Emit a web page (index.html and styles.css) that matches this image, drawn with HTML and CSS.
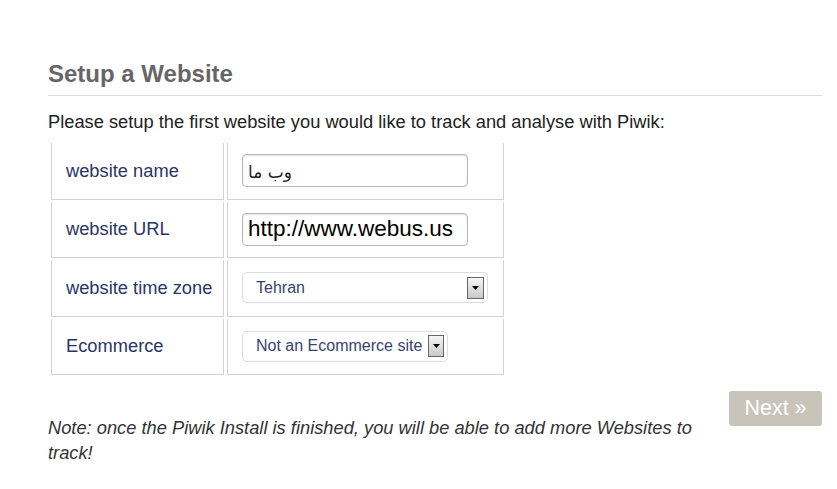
FILE: index.html
```html
<!DOCTYPE html>
<html>
<head>
<meta charset="utf-8">
<link rel="stylesheet" href="styles.css">
</head>
<body>
<div class="page">
  <h2 class="title">Setup a Website</h2>
  <p class="intro">Please setup the first website you would like to track and analyse with Piwik:</p>
  <table class="form">
    <tr>
      <td class="label">website name</td>
      <td class="field"><div class="input fa">وب ما</div></td>
    </tr>
    <tr>
      <td class="label">website URL</td>
      <td class="field"><div class="input url">http://www.webus.us</div></td>
    </tr>
    <tr>
      <td class="label">website time zone</td>
      <td class="field"><div class="select tz"><span class="sel-text">Tehran</span><span class="arrow"><svg width="7" height="4" viewBox="0 0 7 4"><path d="M0 0H7L3.5 4Z" fill="#000"/></svg></span></div></td>
    </tr>
    <tr>
      <td class="label">Ecommerce</td>
      <td class="field"><div class="select ec"><span class="sel-text">Not an Ecommerce site</span><span class="arrow"><svg width="7" height="4" viewBox="0 0 7 4"><path d="M0 0H7L3.5 4Z" fill="#000"/></svg></span></div></td>
    </tr>
  </table>
  <div class="bottom">
    <p class="note">Note: once the Piwik Install is finished, you will be able to add more Websites to track!</p>
    <div class="next">Next »</div>
  </div>
</div>
</body>
</html>
```

FILE: styles.css
```css
html, body {
  margin: 0;
  padding: 0;
  background: #fff;
}
body {
  font-family: "Liberation Sans", Arial, sans-serif;
  width: 837px;
  height: 489px;
  overflow: hidden;
}
.page {
  padding: 59px 15px 0 48px;
}
.title {
  margin: 0;
  font-size: 24px;
  font-weight: bold;
  color: #666;
  line-height: 30px;
  padding-bottom: 6px;
  border-bottom: 1px solid #ddd;
}
.intro {
  margin: 15px 0 0 0;
  font-size: 18.3px;
  line-height: 22px;
  color: #222;
}
.form {
  border-collapse: separate;
  border-spacing: 3px 2px;
  margin: 8px 0 0 0;
}
.form td {
  border: 1px solid #d3d3d3;
  border-top: none;
  height: 55.5px;
  padding: 0;
  vertical-align: middle;
}
.label {
  width: 157px;
  padding-left: 14px !important;
  font-size: 18.3px;
  color: #2a3566;
}
.field {
  width: 261px;
  padding-left: 14px !important;
}
.input {
  box-sizing: border-box;
  width: 226px;
  height: 33px;
  border: 1px solid #b8b8b8;
  border-radius: 4px;
  box-shadow: inset 0 1px 2px rgba(0,0,0,0.12);
  padding: 0 5px;
  display: flex;
  align-items: center;
  background: #fff;
}
.input.fa {
  font-family: "DejaVu Sans", "Noto Sans", sans-serif;
  font-size: 17px;
  color: #222;
  padding-top: 2px;
}
.input.url {
  font-size: 22.5px;
  line-height: 28px;
  color: #000;
}
.select {
  box-sizing: border-box;
  height: 31px;
  border: 1px solid #dcdcdc;
  border-radius: 5px;
  display: flex;
  align-items: center;
  justify-content: space-between;
  padding: 0 3px 0 13px;
  background: #fff;
}
.select.tz { width: 246px; }
.select.ec { width: 206px; }
.sel-text {
  font-size: 16px;
  color: #35446e;
}
.arrow {
  box-sizing: border-box;
  width: 17px;
  height: 22px;
  border: 1px solid #666;
  background: linear-gradient(to bottom, #f6f6f6, #c9c9c9);
  display: flex;
  align-items: center;
  justify-content: center;
}
.select.ec .arrow {
  width: 16px;
  height: 22px;
  margin-left: 4px;
}
.bottom {
  display: flex;
  justify-content: space-between;
  align-items: flex-start;
  margin-top: 14px;
}
.note {
  margin: 24px 0 0 0;
  width: 660px;
  font-style: italic;
  font-size: 18.3px;
  line-height: 25px;
  color: #333;
}
.next {
  width: 93px;
  height: 35px;
  box-sizing: border-box;
  background: #c9c4b9;
  border-radius: 3px;
  color: #fff;
  font-size: 21.5px;
  line-height: 35px;
  text-align: center;
}
```
